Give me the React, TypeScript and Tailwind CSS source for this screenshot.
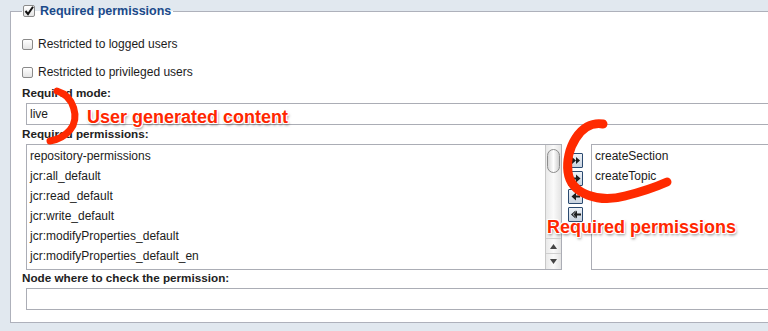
import React from 'react';

const Box = ({ checked = false }: { checked?: boolean }) => (
  <span
    className={`${checked ? 'w-[12px] h-[12px]' : 'w-[11px] h-[11px]'} shrink-0 rounded-[2px] border border-[#8a8a8a] bg-gradient-to-b from-white to-[#e4e4e4] flex items-center justify-center`}
  >
    {checked && (
      <svg width="10" height="10" viewBox="0 0 10 10">
        <path d="M1.5 5 L4 8 L9 0.8" fill="none" stroke="#111" strokeWidth="2" />
      </svg>
    )}
  </span>
);

const MoveBtn = ({ d }: { d: string }) => (
  <button className="w-[15px] h-[15px] border border-[#2b4a70] rounded-[1px] bg-gradient-to-b from-[#eef2f7] to-[#c9d3df] flex items-center justify-center p-0">
    <svg width="12" height="11" viewBox="0 0 12 11">
      <path d={d} fill="#1d1d1d" />
    </svg>
  </button>
);

const perms = [
  'repository-permissions',
  'jcr:all_default',
  'jcr:read_default',
  'jcr:write_default',
  'jcr:modifyProperties_default',
  'jcr:modifyProperties_default_en',
];

const redText =
  "absolute font-['Liberation_Sans'] font-bold text-[18px] leading-[18px] text-[#ff2600] whitespace-nowrap [text-shadow:-1px_-1px_0_#fff,1px_-1px_0_#fff,-1px_1px_0_#fff,1px_1px_0_#fff,0_0_2px_#fff,1px_2px_3px_rgba(0,0,0,0.55)]";

const label = 'h-[14px] leading-[14px] font-bold text-[11.7px] text-[#222]';

export default function App() {
  return (
    <div className="relative w-[768px] h-[331px] overflow-hidden bg-[#e1e8ef] font-['Liberation_Sans'] text-[12px] text-[#1c1c1c]">
      <div className="pl-[10px] pt-[3px]">
        <fieldset className="w-[800px] border border-[#aeb1bb] bg-white pl-[11px] pb-[12px]">
          <legend className="pl-[1px] pr-[2px] flex items-center gap-[5px] h-[16px]">
            <Box checked />
            <span className="font-bold text-[12.5px] text-[#1b4a8a]">Required permissions</span>
          </legend>

          <div className="h-[28px] flex items-center gap-[5px] mt-[11px]">
            <Box />
            <span>Restricted to logged users</span>
          </div>
          <div className="h-[28px] flex items-center gap-[5px]">
            <Box />
            <span>Restricted to privileged users</span>
          </div>

          <div className={label}>Required mode:</div>
          <div className="ml-[4px] mt-[3px] w-[760px] h-[22px] border border-[#abadb5] flex items-center pl-[3px]">live</div>

          <div className={`mt-[2px] ${label}`}>Required permissions:</div>
          <div className="ml-[4px] mt-[3px] flex items-start">
            <div className="w-[536px] h-[126px] border border-[#abadb5] flex">
              <div className="flex-1 pt-[1px] pl-[3px]">
                {perms.map((p) => (
                  <div key={p} className="h-[20px] leading-[20px]">{p}</div>
                ))}
              </div>
              <div className="w-[16px] border-l border-[#c8c8c8] bg-gradient-to-r from-[#e9e9e9] via-[#fafafa] to-[#e4e4e4] flex flex-col">
                <div className="mx-auto mt-[4px] w-[13px] h-[24px] rounded-full border border-[#8c8c8c] bg-gradient-to-r from-[#d9d9d9] via-white to-[#cfcfcf]" />
                <div className="flex-1" />
                <div className="h-[15px] border-t border-[#cfcfcf] flex items-center justify-center">
                  <svg width="7" height="5" viewBox="0 0 7 5"><path d="M3.5 0 L7 5 L0 5 Z" fill="#444" /></svg>
                </div>
                <div className="h-[16px] border-t border-[#cfcfcf] flex items-center justify-center">
                  <svg width="7" height="5" viewBox="0 0 7 5"><path d="M0 0 L7 0 L3.5 5 Z" fill="#444" /></svg>
                </div>
              </div>
            </div>
            <div className="ml-[6px] mt-[9px] flex flex-col gap-[3px]">
              <MoveBtn d="M2 2 L6 5.5 L2 9 Z M6 2 L10 5.5 L6 9 Z" />
              <MoveBtn d="M2 4.5 H6 V1.5 L10.5 5.5 L6 9.5 V6.5 H2 Z" />
              <MoveBtn d="M10 4.5 H6 V1.5 L1.5 5.5 L6 9.5 V6.5 H10 Z" />
              <MoveBtn d="M11 4.5 H7 V1.5 L3.5 5.5 L7 9.5 V6.5 H11 Z M5.5 1.5 L1 5.5 L5.5 9.5 L5.5 8.3 L2.6 5.5 L5.5 2.7 Z" />
            </div>
            <div className="ml-[8px] w-[300px] h-[126px] border border-[#abadb5] pt-[1px] pl-[3px]">
              <div className="h-[20px] leading-[20px]">createSection</div>
              <div className="h-[20px] leading-[20px]">createTopic</div>
            </div>
          </div>

          <div className={`mt-[1px] ${label}`}>Node where to check the permission:</div>
          <div className="ml-[4px] mt-[3px] w-[760px] h-[22px] border border-[#abadb5]" />
        </fieldset>
      </div>

      <svg className="absolute left-0 top-0 pointer-events-none" width="768" height="331">
        <path d="M57 91 C74 96 80 118 70 130 C64 137 57 140 50 141" fill="none" stroke="#ff2a00" strokeWidth="7" strokeLinecap="round" />
        <path d="M603 124 C580 120 565 150 568 172 C571 195 600 203 625 196 C645 191 658 186 667 182" fill="none" stroke="#ff2a00" strokeWidth="9" strokeLinecap="round" />
      </svg>
      <div className={`${redText} left-[87px] top-[108px]`}>User generated content</div>
      <div className={`${redText} left-[547px] top-[218px]`}>Required permissions</div>
    </div>
  );
}
